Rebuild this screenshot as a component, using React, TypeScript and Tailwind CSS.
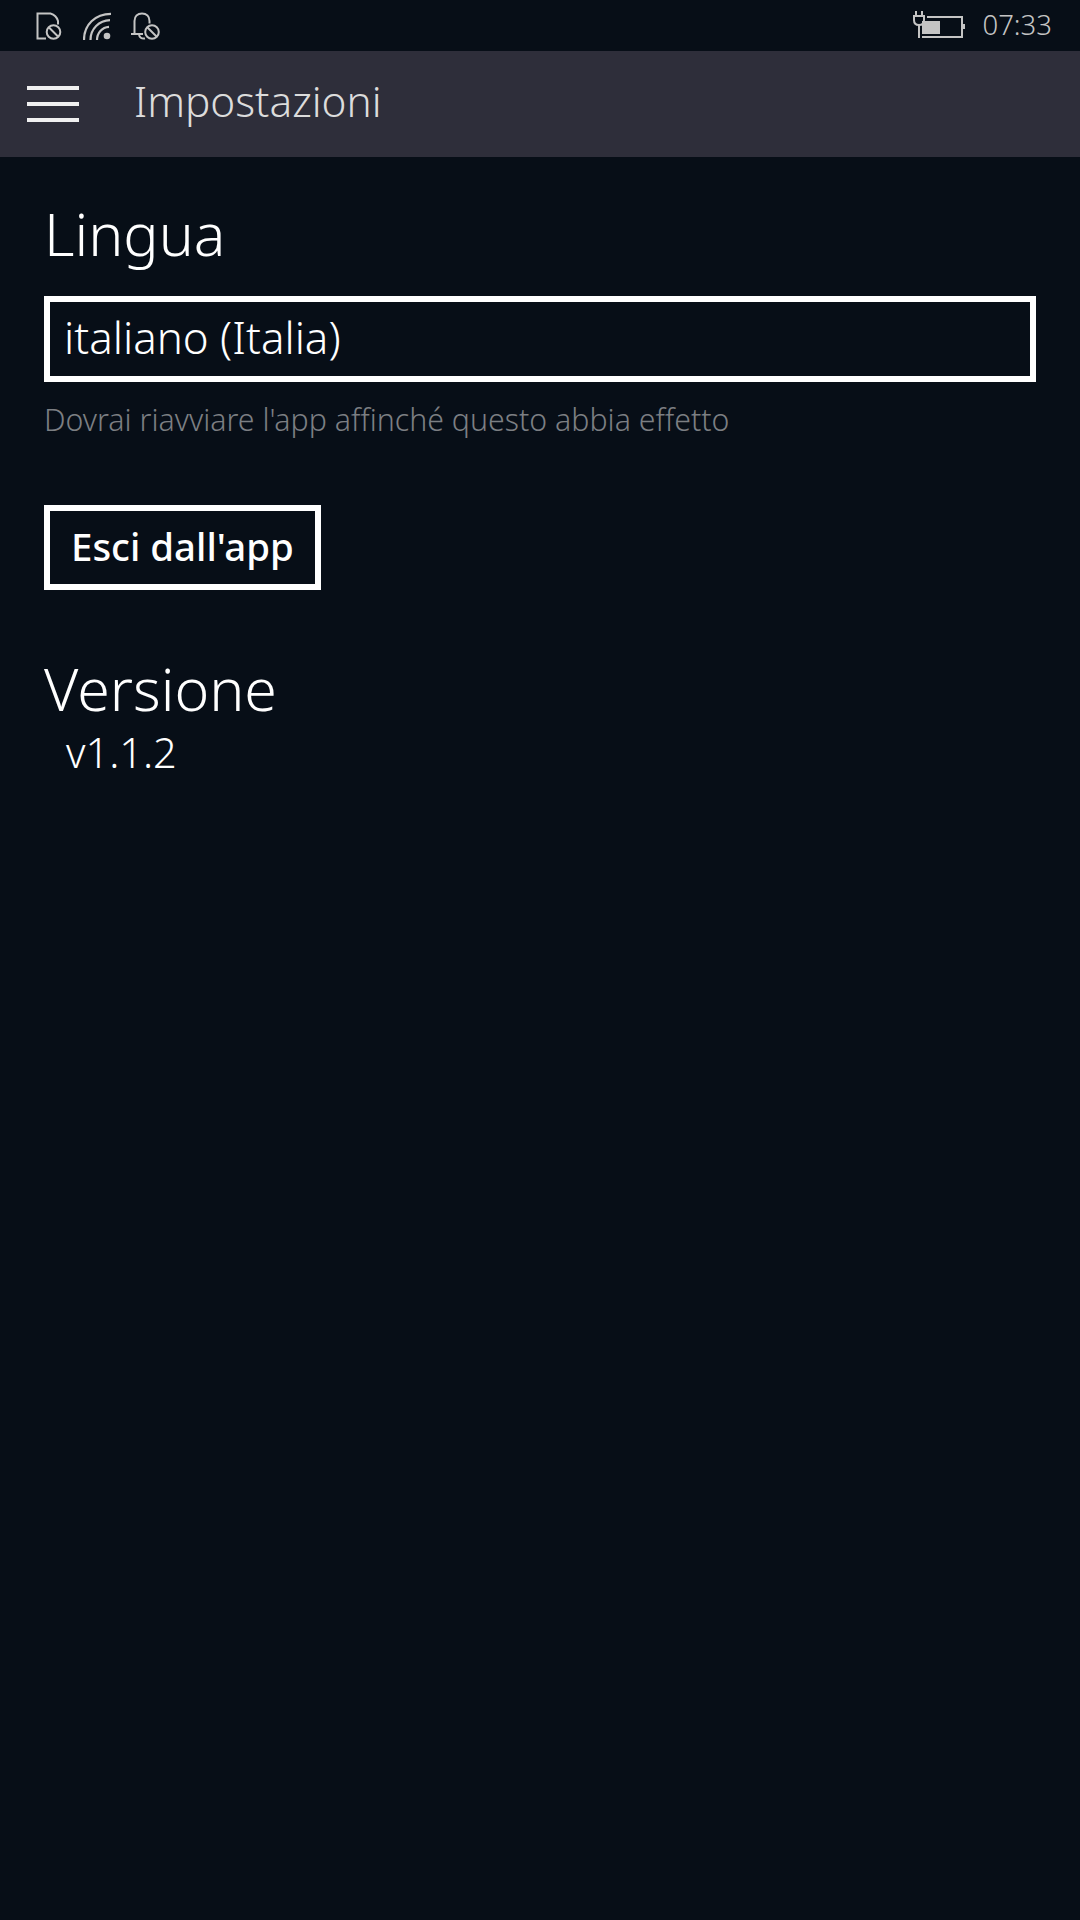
const iconStroke = "#c4c4c4";

function NoSimIcon() {
  return (
    <svg width="27" height="28" viewBox="0 0 27 28" fill="none" stroke={iconStroke} strokeWidth="2">
      <path d="M10 26.5H1.5V1.5H14.5C18 2.5 21 5.5 22 9V12.5" />
      <circle cx="17.5" cy="20" r="6.8" />
      <path d="M13 15.5L22 24.5" />
    </svg>
  );
}

function WifiIcon() {
  return (
    <svg width="28" height="28" viewBox="0 0 28 28" fill="none" stroke={iconStroke} strokeWidth="2.2">
      <path d="M1 28C1 13 12 1.8 28 1.8" />
      <path d="M7.5 28C7.5 17 16 8.5 27 8.2" />
      <path d="M14 28C14 21 19 15.2 26 14.8" />
      <circle cx="24" cy="24" r="3.3" fill={iconStroke} stroke="none" />
    </svg>
  );
}

function BellOffIcon() {
  return (
    <svg width="30" height="28" viewBox="0 0 30 28" fill="none" stroke={iconStroke} strokeWidth="2">
      <path d="M0 22H3.5V9C3.5 4.5 6.5 1.5 11 1.5C15.5 1.5 18.5 4.5 18.5 9V11.5" />
      <path d="M3.5 22H12" />
      <path d="M8 23C9 26 11 27 14 26.5" />
      <circle cx="21" cy="20" r="6.8" />
      <path d="M16.5 15.5L25.5 24.5" />
    </svg>
  );
}

function BatteryIcon() {
  return (
    <svg width="53" height="27" viewBox="0 0 53 27" fill="none">
      <path d="M2 5V9C2 12 4 14 7 14C10 14 12 12 12 9V5H2Z" stroke={iconStroke} strokeWidth="2" />
      <path d="M4 0V5M10 0V5" stroke={iconStroke} strokeWidth="2" />
      <path d="M7 14V27" stroke={iconStroke} strokeWidth="2" />
      <path d="M15 6H50V26H10" stroke={iconStroke} strokeWidth="2" />
      <rect x="10" y="10" width="18" height="13" fill={iconStroke} />
      <rect x="51" y="13" width="3" height="5" fill={iconStroke} />
    </svg>
  );
}

export default function App() {
  return (
    <main
      className="w-[1080px] h-[1920px] bg-[#070e17] text-white flex flex-col overflow-hidden"
      style={{ fontFamily: '"Noto Sans", sans-serif' }}
    >
      {/* status bar */}
      <div className="h-[51px] flex items-center justify-between pl-[36px] pr-[28px] shrink-0">
        <div className="flex items-center gap-[20px]">
          <NoSimIcon />
          <WifiIcon />
          <BellOffIcon />
        </div>
        <div className="flex items-center gap-[17px] pb-[2px]">
          <BatteryIcon />
          <span className="text-[27.5px] leading-none font-light text-[#c4c4c4]">07:33</span>
        </div>
      </div>

      {/* header */}
      <div className="h-[106px] bg-[#2e2e3a] flex items-center pl-[27px] shrink-0">
        <div className="w-[52px] flex flex-col gap-[12px]">
          <div className="h-[4px] bg-[#f0f0f0]" />
          <div className="h-[4px] bg-[#f0f0f0]" />
          <div className="h-[4px] bg-[#f0f0f0]" />
        </div>
        <h1 className="ml-[55px] pb-[6px] text-[42.3px] leading-none font-light text-[#dcdcdc]">Impostazioni</h1>
      </div>

      {/* settings */}
      <div className="px-[44px] flex flex-col items-start">
        <h2 className="mt-[41px] text-[59px] leading-[70px] font-light">Lingua</h2>
        <div className="mt-[28px] w-[992px] h-[86px] border-[6px] border-white flex items-center pl-[14px] pb-[3px] text-[43.9px] font-light">
          italiano (Italia)
        </div>
        <p className="mt-[18px] text-[30.3px] leading-[40px] font-light text-[#7c7f83]">
          Dovrai riavviare l'app affinché questo abbia effetto
        </p>
        <button className="mt-[65px] w-[277px] h-[85px] border-[6px] border-white flex items-center justify-center pb-[1px] text-[38.4px] font-medium">
          Esci dall'app
        </button>
        <h2 className="mt-[63px] text-[59px] leading-[70px] font-light">Versione</h2>
        <p className="mt-[4px] ml-[22px] text-[41.5px] leading-[50px] font-light">v1.1.2</p>
      </div>
    </main>
  );
}
